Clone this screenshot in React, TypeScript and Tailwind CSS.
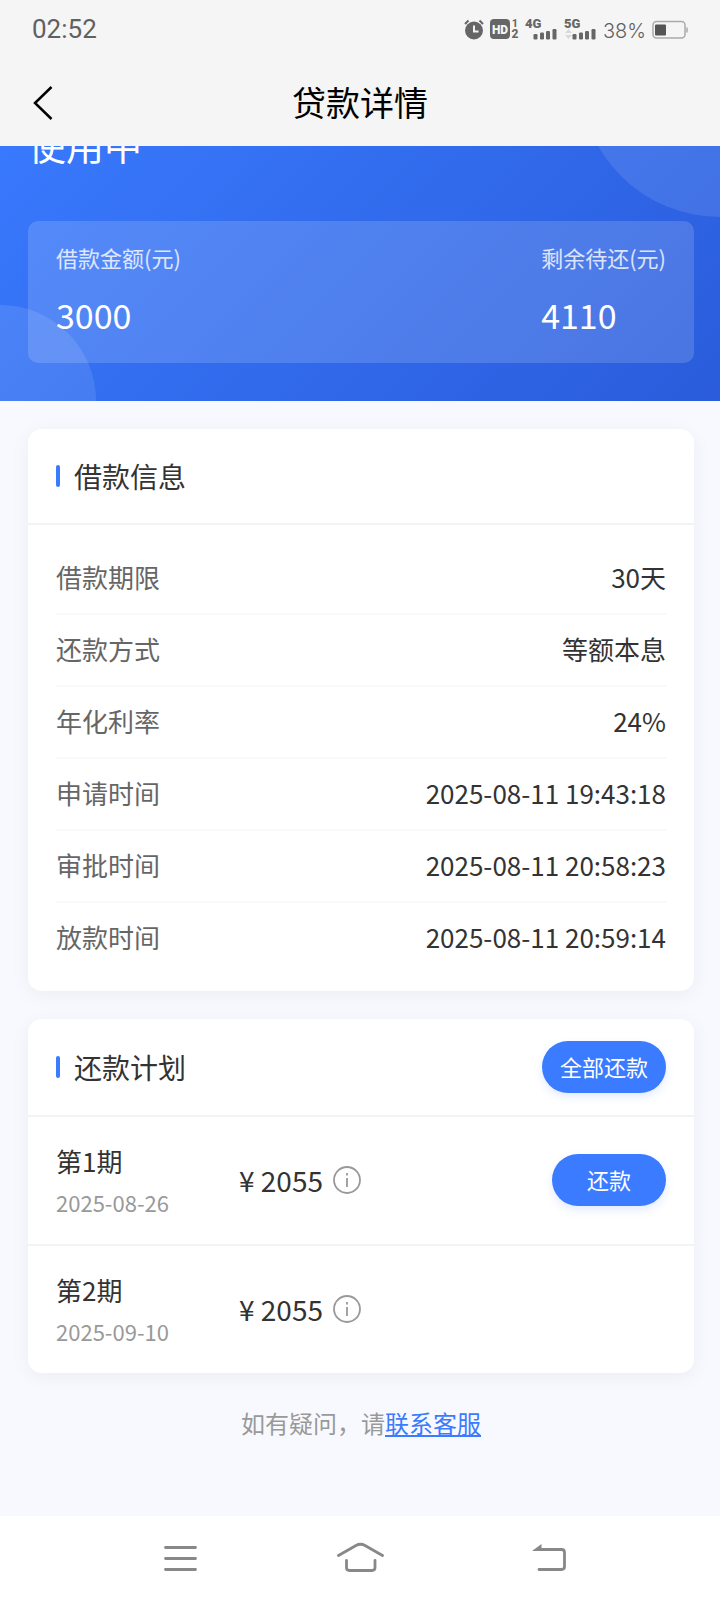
import React from 'react';

interface InfoRow {
  label: string;
  value: string;
}

interface Installment {
  id: number;
  name: string;
  date: string;
  amount: number;
  payable: boolean;
}

const infoRows: InfoRow[] = [
  { label: '借款期限', value: '30天' },
  { label: '还款方式', value: '等额本息' },
  { label: '年化利率', value: '24%' },
  { label: '申请时间', value: '2025-08-11 19:43:18' },
  { label: '审批时间', value: '2025-08-11 20:58:23' },
  { label: '放款时间', value: '2025-08-11 20:59:14' },
];

const installments: Installment[] = [
  { id: 1, name: '第1期', date: '2025-08-26', amount: 2055, payable: true },
  { id: 2, name: '第2期', date: '2025-09-10', amount: 2055, payable: false },
];

function SignalIcon({ label, arrows }: { label: string; arrows?: boolean }) {
  return (
    <svg width="33" height="24" viewBox="0 0 33 24" fill="#666">
      <text x="0" y="11" fontFamily="Roboto, sans-serif" fontSize="13" fontWeight="900">
        {label}
      </text>
      {arrows && <path d="M1 16l3.500-4 3.500 4zM1 18h7l-3.500 4z" fill="#d9d9d9" />}
      <rect x="8.5" y="17" width="4" height="5.5" rx="1.200" />
      <rect x="15" y="15.5" width="4" height="7" rx="1.200" />
      <rect x="21" y="14" width="4" height="8.5" rx="1.200" />
      <rect x="27.5" y="12" width="4" height="10.5" rx="1.200" />
    </svg>
  );
}

function StatusBar() {
  return (
    <div className="flex h-[58px] items-center justify-between px-8 text-[#606060]">
      <span className="font-[Roboto] text-[26px] leading-8">02:52</span>
      <div className="flex items-center">
        <svg width="20" height="24" viewBox="0 0 20 24" className="mr-1.5">
          <circle cx="10" cy="13.5" r="9" fill="#666" />
          <path d="M1 7l3.500-3.500M19 7l-3.500-3.500" stroke="#666" strokeWidth="2" />
          <path d="M10 8.500v6h4.500" fill="none" stroke="#f5f5f5" strokeWidth="2" />
        </svg>
        <svg width="29" height="24" viewBox="0 0 29 24" className="mr-1.5 overflow-visible" fill="#666" fontFamily="Roboto, sans-serif">
          <rect x="0" y="2" width="20" height="20" rx="4" />
          <text x="10" y="16.500" fontSize="12" fontWeight="900" fill="#f5f5f5" textAnchor="middle">
            HD
          </text>
          <text x="25" y="10" fontSize="11" fontWeight="700" textAnchor="middle">1</text>
          <text x="25" y="21" fontSize="12" fontWeight="800" textAnchor="middle">2</text>
        </svg>
        <span className="mr-1.5"><SignalIcon label="4G" /></span>
        <span className="mr-1.5"><SignalIcon label="5G" arrows /></span>
        <span className="mr-1.5 pt-1 font-[Inter] text-[20px] font-light leading-6">38%</span>
        <svg width="36" height="24" viewBox="0 0 36 24">
          <rect x="1" y="4.500" width="32" height="16.500" rx="3.500" fill="none" stroke="#aaa" strokeWidth="1.500" />
          <rect x="3" y="7.500" width="11" height="11" rx="1" fill="#555" />
          <path d="M35 10.500v5" stroke="#aaa" strokeWidth="1.500" />
        </svg>
      </div>
    </div>
  );
}

function CardHeader({ title, children }: { title: string; children?: React.ReactNode }) {
  return (
    <div className="flex items-center justify-between border-b-2 border-[#f2f3f5] px-7 py-[22px]">
      <h2 className="flex items-center gap-3.5 text-[28px] leading-[50px] text-[#333]">
        <span className="h-[22px] w-1 rounded-xs bg-[#3a7bff]" />
        {title}
      </h2>
      {children}
    </div>
  );
}

function InfoIcon() {
  return (
    <svg width="28" height="28" viewBox="0 0 28 28" fill="none" stroke="#999" strokeWidth="1.800">
      <circle cx="14" cy="14" r="13" />
      <path d="M14 12v9M14 7v2.500" />
    </svg>
  );
}

export default function App() {
  return (
    <div className="flex min-h-screen flex-col bg-[#f8f9fe] font-['Noto_Sans_CJK_SC',sans-serif]">
      <header className="relative z-10 bg-[#f5f5f5]">
        <StatusBar />
        <div className="relative flex h-[88px] items-center justify-center">
          <button aria-label="返回" className="absolute left-7 top-5.5 p-1">
            <svg width="24" height="40" viewBox="0 0 24 40" fill="none" stroke="#000" strokeWidth="2.500">
              <path d="M19.500 3L3 19l16.500 16" />
            </svg>
          </button>
          <h1 className="text-[34px] leading-[50px] text-black">贷款详情</h1>
        </div>
      </header>

      {/* the hero is scrolled partly under the header */}
      <section className="relative -mt-[66px] overflow-hidden bg-linear-135 from-[#3a7bff] to-[#2a5cdb] pb-[38px] pl-7 pr-[26px] pt-[38px] text-white">
        <div className="absolute -right-[140px] -top-[143px] size-[280px] rounded-full bg-white/10" />
        <div className="absolute -bottom-24 -left-24 size-48 rounded-full bg-white/10" />
        <p className="relative mb-[51px] text-[38px] leading-[52px]">使用中</p>
        <dl className="relative flex justify-between rounded-[10px] bg-white/15 px-7 pb-6 pt-5">
          <div>
            <dt className="mb-[18px] text-[22px] leading-8 text-white/80">借款金额(元)</dt>
            <dd className="text-[34px] leading-[48px]">3000</dd>
          </div>
          <div>
            <dt className="mb-[18px] text-[22px] leading-8 text-white/80">剩余待还(元)</dt>
            <dd className="text-[34px] leading-[48px]">4110</dd>
          </div>
        </dl>
      </section>

      <main className="flex flex-1 flex-col gap-7 pl-7 pr-[26px] pt-7">
        <section className="rounded-[14px] bg-white shadow-[0_4px_20px_rgba(0,0,0,0.05)]">
          <CardHeader title="借款信息" />
          <dl className="px-7 py-[18px]">
            {infoRows.map((row) => (
              <div
                key={row.label}
                className="flex justify-between border-b-2 border-[#f9f9fa] pb-[17px] pt-[15px] text-[26px] leading-[38px] last:border-b-0"
              >
                <dt className="text-[#666]">{row.label}</dt>
                <dd className="text-[#333]">{row.value}</dd>
              </div>
            ))}
          </dl>
        </section>

        <section className="rounded-[14px] bg-white shadow-[0_4px_20px_rgba(0,0,0,0.05)]">
          <CardHeader title="还款计划">
            <button className="h-[52px] w-[124px] rounded-full bg-[#3a7bff] pb-0.5 text-[22px] leading-8 text-white shadow-[0_4px_8px_rgba(58,123,255,0.15)]">
              全部还款
            </button>
          </CardHeader>
          <ul>
            {installments.map((item) => (
              <li key={item.id} className="flex items-center border-b-2 border-[#f2f3f5] px-7 pb-[26px] pt-[25px] last:border-b-0">
                <div className="w-[30%]">
                  <p className="text-[26px] leading-[38px] text-[#333]">{item.name}</p>
                  <p className="mt-1.5 text-[22px] leading-8 text-[#999]">{item.date}</p>
                </div>
                <div className="flex flex-1 items-center gap-2.5">
                  <span className="text-[28px] leading-10 text-[#333]">¥ {item.amount}</span>
                  <button aria-label="详情"><InfoIcon /></button>
                </div>
                {item.payable && (
                  <button className="h-[52px] w-[114px] rounded-full bg-[#3a7bff] pb-0.5 text-[22px] leading-8 text-white shadow-[0_4px_8px_rgba(58,123,255,0.15)]">
                    还款
                  </button>
                )}
              </li>
            ))}
          </ul>
        </section>

        <p className="py-1 text-center text-[24px] leading-9 text-[#999]">
          如有疑问，请<a href="#" className="text-[#3a7bff] underline">联系客服</a>
        </p>
      </main>

      <nav className="flex h-[84px] items-center justify-between bg-white px-[152px]">
        <button aria-label="菜单">
          <svg width="48" height="40" viewBox="0 0 48 40" fill="none" stroke="#888" strokeWidth="2.800" strokeLinecap="round">
            <path d="M13.500 9.500h30M13.500 20.500h30M13.500 31.500h30" />
          </svg>
        </button>
        <button aria-label="主页">
          <svg width="48" height="40" viewBox="0 0 48 40" fill="none" stroke="#888" strokeWidth="2.800" strokeLinecap="round">
            <path d="M2.500 17.500L20 7.500q4.500-2.500 9 0L46.500 17.500" />
            <path d="M10.500 22.500v7q0 3 3 3h22.500q3 0 3-3v-7" />
          </svg>
        </button>
        <button aria-label="后退">
          <svg width="48" height="40" viewBox="0 0 48 40" fill="none" stroke="#888" strokeWidth="2.800" strokeLinecap="round">
            <path d="M20 11.500h21.500q3 0 3 3v14q0 3-3 3H19" />
            <path d="M12 12.900L21.500 6v6.900z" fill="#888" stroke="none" />
          </svg>
        </button>
      </nav>
    </div>
  );
}
